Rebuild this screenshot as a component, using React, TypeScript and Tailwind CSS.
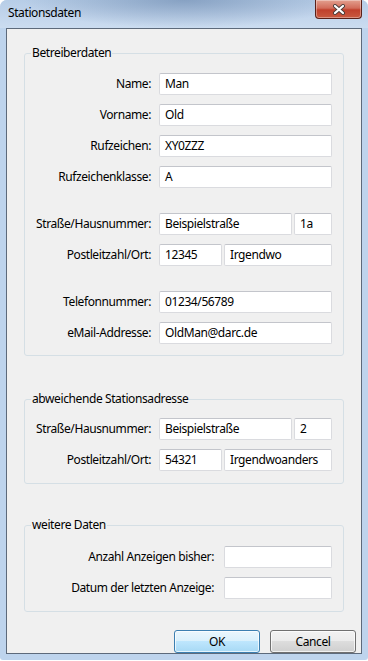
import React from "react";

const font = { fontFamily: '"Noto Sans", "Open Sans", sans-serif' };

function Field({ w, text }: { w: string; text?: string }) {
  return (
    <div
      className={`${w} h-[22px] bg-white border border-[#dadbdf] border-t-[#c3c5cb] rounded-[2px] flex items-center pl-[5px] text-[12px] text-black whitespace-nowrap overflow-hidden`}
    >
      {text}
    </div>
  );
}

function Row({
  label,
  children,
  className = "",
}: {
  label: string;
  children: React.ReactNode;
  className?: string;
}) {
  return (
    <div className={`flex items-center h-[22px] ${className}`}>
      <div className="flex-1 text-right pr-[8px] text-[12px] text-black whitespace-nowrap">{label}</div>
      <div className="flex gap-[2px]">{children}</div>
    </div>
  );
}

function Group({
  title,
  children,
  className = "",
}: {
  title: string;
  children: React.ReactNode;
  className?: string;
}) {
  return (
    <fieldset
      className={`ml-[17px] w-[320px] border border-[#d5dfe5] rounded-[3px] pr-[11px] ${className}`}
    >
      <legend className="ml-[6px] px-[1px] text-[12px] leading-[16px] text-black">{title}</legend>
      {children}
    </fieldset>
  );
}

export default function App() {
  return (
    <div className="w-[368px] h-[661px] bg-white tracking-[-0.4px]" style={font}>
      <div className="w-[368px] h-[660px] rounded-t-[7px] rounded-b-[3px] bg-[#bed4ed] flex flex-col overflow-hidden">
        {/* Title bar */}
        <div className="h-[28px] flex items-start justify-between bg-[image:radial-gradient(ellipse_160px_28px_at_50%_0%,rgba(95,125,165,0.55),transparent),linear-gradient(#b7cde7,#cbdcf0)]">
          <div className="pl-[8px] pt-[5px] text-[12px] leading-[16px] text-black">Stationsdaten</div>
          <div className="mr-[6px] w-[47px] h-[19px] rounded-b-[4px] border border-t-0 border-[#5a2018] bg-[linear-gradient(#e3a08f,#d26c5a_45%,#c0402c_55%,#c95a40)] flex items-center justify-center shadow-[inset_0_0_0_1px_rgba(255,255,255,0.35)]">
            <svg width="14" height="11" viewBox="0 0 14 11">
              <path d="M3 2 L11 9 M11 2 L3 9" stroke="#4a3d3a" strokeWidth="4" strokeLinecap="round" />
              <path d="M3 2 L11 9 M11 2 L3 9" stroke="#ffffff" strokeWidth="2.2" strokeLinecap="round" />
            </svg>
          </div>
        </div>

        {/* Client area */}
        <div className="flex-1 mx-[6px] mb-[6px] border border-[#5d6a7b] bg-[#f0f0f0] flex flex-col">
          <Group title="Betreiberdaten" className="mt-[16px] pb-[11px]">
            <div className="flex flex-col gap-[9px] mt-[12px]">
              <Row label="Name:">
                <Field w="w-[173px]" text="Man" />
              </Row>
              <Row label="Vorname:">
                <Field w="w-[173px]" text="Old" />
              </Row>
              <Row label="Rufzeichen:">
                <Field w="w-[173px]" text="XY0ZZZ" />
              </Row>
              <Row label="Rufzeichenklasse:">
                <Field w="w-[173px]" text="A" />
              </Row>
              <Row label="Straße/Hausnummer:" className="mt-[16px]">
                <Field w="w-[133px]" text="Beispielstraße" />
                <Field w="w-[38px]" text="1a" />
              </Row>
              <Row label="Postleitzahl/Ort:">
                <Field w="w-[63px]" text="12345" />
                <Field w="w-[108px]" text="Irgendwo" />
              </Row>
              <Row label="Telefonnummer:" className="mt-[16px]">
                <Field w="w-[173px]" text="01234/56789" />
              </Row>
              <Row label="eMail-Addresse:">
                <Field w="w-[173px]" text="OldMan@darc.de" />
              </Row>
            </div>
          </Group>

          <Group title="abweichende Stationsadresse" className="mt-[35px] pb-[12px]">
            <div className="flex flex-col gap-[9px] mt-[11px]">
              <Row label="Straße/Hausnummer:">
                <Field w="w-[133px]" text="Beispielstraße" />
                <Field w="w-[38px]" text="2" />
              </Row>
              <Row label="Postleitzahl/Ort:">
                <Field w="w-[63px]" text="54321" />
                <Field w="w-[108px]" text="Irgendwoanders" />
              </Row>
            </div>
          </Group>

          <Group title="weitere Daten" className="mt-[33px] pb-[12px]">
            <div className="flex flex-col gap-[9px] mt-[13px]">
              <div className="flex items-center h-[22px]">
                <div className="flex-1 text-right pr-[10px] text-[12px] text-black whitespace-nowrap">Anzahl Anzeigen bisher:</div>
                <Field w="w-[108px]" />
              </div>
              <div className="flex items-center h-[22px]">
                <div className="flex-1 text-right pr-[10px] text-[12px] text-black whitespace-nowrap">Datum der letzten Anzeige:</div>
                <Field w="w-[108px]" />
              </div>
            </div>
          </Group>

          <div className="mt-[18px] flex justify-end gap-[10px] pr-[5px]">
            <div className="w-[86px] h-[23px] rounded-[3px] border border-[#3c7fb1] bg-[linear-gradient(#eaf6fd,#d9f0fc_50%,#bee6fd_50%,#a7d9f5)] shadow-[inset_0_0_0_1px_rgba(255,255,255,0.7)] flex items-center justify-center text-[12px] text-black">
              OK
            </div>
            <div className="w-[86px] h-[23px] rounded-[3px] border border-[#707070] bg-[linear-gradient(#f2f2f2,#ebebeb_50%,#dddddd_50%,#cfcfcf)] shadow-[inset_0_0_0_1px_rgba(255,255,255,0.7)] flex items-center justify-center text-[12px] text-black">
              Cancel
            </div>
          </div>
        </div>
      </div>
    </div>
  );
}
